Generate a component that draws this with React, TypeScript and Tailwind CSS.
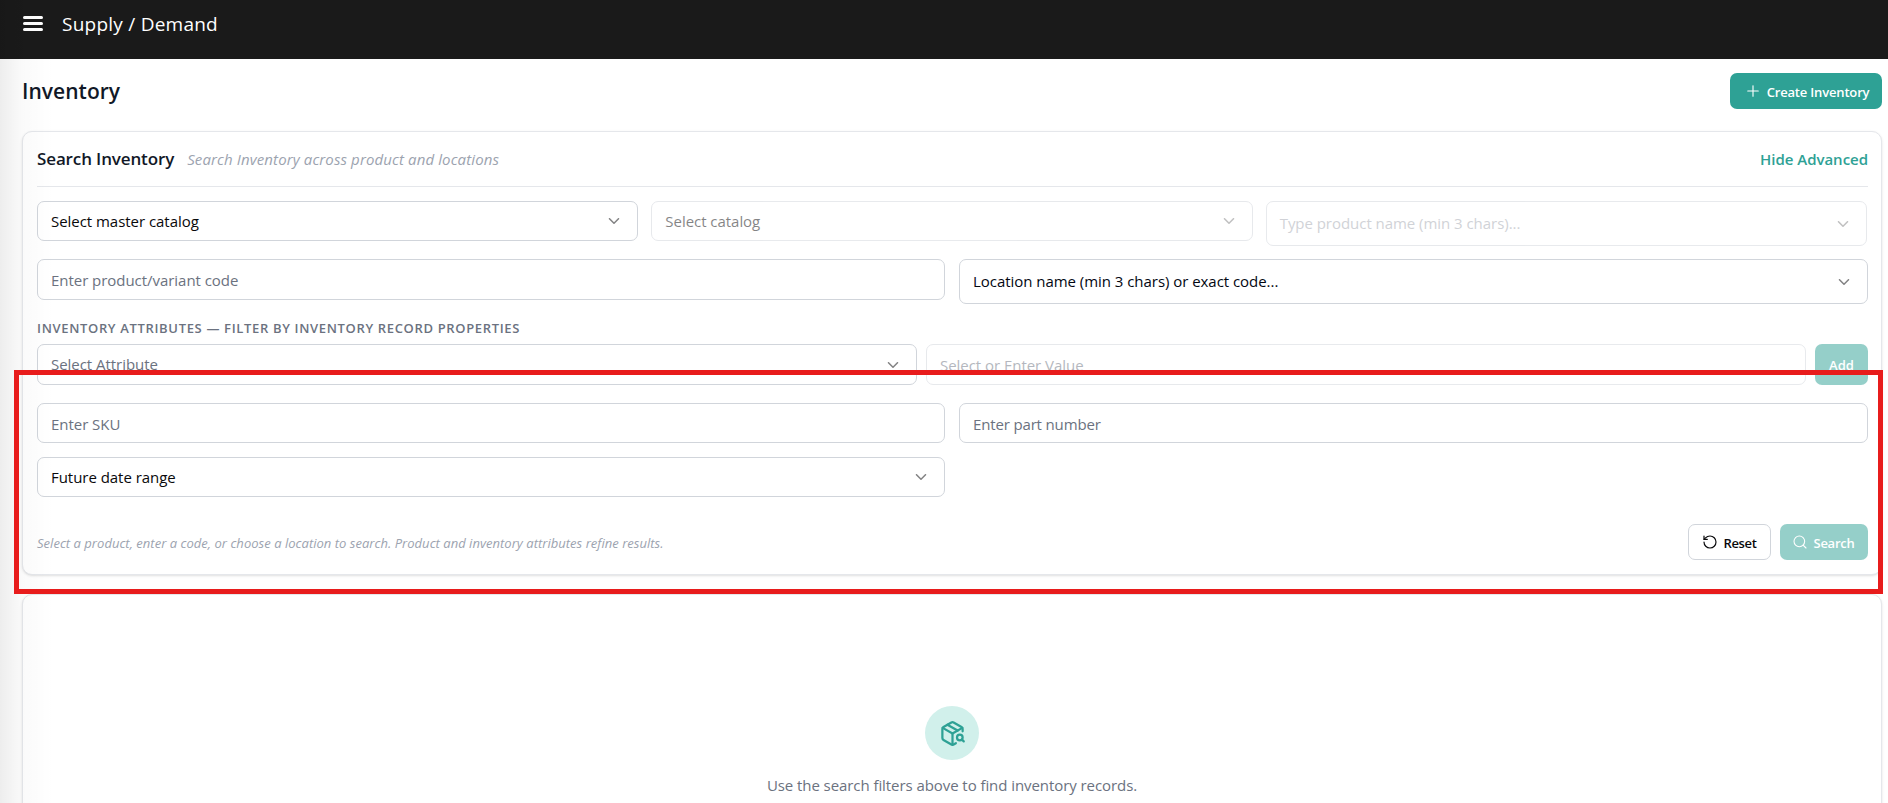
import { ChevronDown, PackageSearch, Plus, RotateCcw, Search } from "lucide-react";
import { clsx } from "clsx";

interface FieldProps {
  text: string;
  chevron?: boolean;
  className?: string;
}

function Field({ text, chevron, className }: FieldProps) {
  return (
    <div
      className={clsx(
        "flex items-center justify-between rounded-[7px] border border-[#d1d5db] pr-[14px] pl-[13px] text-[15px] tracking-[-0.04px]",
        className,
      )}
    >
      <span className="whitespace-nowrap">{text}</span>
      {chevron && <ChevronDown className="size-[18px] text-[#09090b] opacity-50" />}
    </div>
  );
}

function TopBar() {
  return (
    <header className="flex h-[59px] items-start gap-[19px] bg-[#1a1a1a] pl-[23px] text-white">
      <div className="mt-4 flex w-5 flex-col gap-[3px]">
        <span className="h-[3px] rounded-sm bg-white" />
        <span className="h-[3px] rounded-sm bg-white" />
        <span className="h-[3px] rounded-sm bg-white" />
      </div>
      <span className="mt-[10px] text-[19px] leading-7 tracking-[0.24px]">Supply / Demand</span>
    </header>
  );
}

function SearchCard() {
  return (
    <section className="h-[444px] rounded-[10px] border border-[#e5e7eb] bg-white pr-[13px] pl-[14px] shadow-[0_1px_3px_rgba(0,0,0,0.1),0_1px_2px_-1px_rgba(0,0,0,0.1)]">
      <div className="flex h-[55px] items-center border-b border-[#e5e7eb]">
        <h2 className="text-[17px] font-semibold tracking-[-0.13px] text-[#111827]">
          Search Inventory
        </h2>
        <span className="ml-[13px] text-[15px] tracking-[0.12px] text-[#9ca3af] italic">
          Search Inventory across product and locations
        </span>
        <button className="ml-auto text-[15px] font-semibold tracking-[-0.02px] text-[#2ea195]">
          Hide Advanced
        </button>
      </div>

      <div className="mt-[14px] grid grid-cols-3 items-start gap-[13px] pr-px">
        <Field text="Select master catalog" chevron className="h-10 text-[#09090b]" />
        <Field text="Select catalog" chevron className="h-10 text-[#09090b] opacity-50" />
        <Field
          text="Type product name (min 3 chars)..."
          chevron
          className="h-[45px] text-[#a3a7b0] opacity-50"
        />
      </div>

      <div className="mt-[13px] grid grid-cols-[908px_1fr] items-start gap-[14px]">
        <Field text="Enter product/variant code" className="h-[41px] pt-0.5 text-[#6b7280]" />
        <Field
          text="Location name (min 3 chars) or exact code..."
          chevron
          className="h-[45px] text-[#030712]"
        />
      </div>

      <p className="mt-3 h-7 text-[13px] leading-6 font-semibold tracking-[0.66px] text-[#6b7280]">
        INVENTORY ATTRIBUTES — FILTER BY INVENTORY RECORD PROPERTIES
      </p>
      <div className="flex gap-[9px]">
        <Field text="Select Attribute" chevron className="h-[41px] flex-1 text-[#6b7280]" />
        <Field
          text="Select or Enter Value"
          className="h-[41px] flex-1 pt-px text-[#6b7280] opacity-50"
        />
        <button className="h-[41px] w-[53px] rounded-[7px] bg-[#2ea195] pt-0.5 text-[13px] font-semibold text-white opacity-50">
          Add
        </button>
      </div>

      <div className="mt-[18px] grid grid-cols-[908px_1fr] gap-[14px]">
        <Field text="Enter SKU" className="h-10 pt-0.5 text-[#6b7280]" />
        <Field
          text="Enter part number"
          className="h-10 pt-0.5 tracking-[-0.15px] text-[#6b7280]"
        />
        <Field text="Future date range" chevron className="h-10 text-[#09090b]" />
      </div>

      <div className="mt-[27px] flex h-9 items-center gap-[9px]">
        <span className="mr-auto pt-[3px] text-[13px] tracking-[0.03px] text-[#9ca3af] italic">
          Select a product, enter a code, or choose a location to search. Product and inventory
          attributes refine results.
        </span>
        <button className="flex h-9 w-[83px] items-center justify-center gap-[5px] rounded-[7px] border border-[#d1d5db] text-[13px] font-semibold tracking-[-0.35px] text-[#09090b]">
          <RotateCcw className="size-4" strokeWidth={1.8} />
          <span className="pt-[3px]">Reset</span>
        </button>
        <button className="flex h-9 w-[88px] items-center justify-center gap-[5px] rounded-[7px] bg-[#2ea195] pr-px text-[13px] font-semibold tracking-[-0.25px] text-white opacity-50">
          <Search className="size-4" strokeWidth={1.6} />
          <span className="pt-[3px]">Search</span>
        </button>
      </div>
    </section>
  );
}

function EmptyState() {
  return (
    <section className="mt-[19px] flex h-[240px] flex-col items-center rounded-[10px] border border-[#e5e7eb] bg-white pt-[111px] shadow-sm">
      <div className="flex size-[54px] items-center justify-center rounded-full bg-[#d1f0eb]">
        <PackageSearch className="size-[27px] text-[#2ea195]" />
      </div>
      <p className="mt-[13px] text-[15px] leading-6 tracking-[-0.07px] text-[#6b7280]">
        Use the search filters above to find inventory records.
      </p>
    </section>
  );
}

export default function App() {
  return (
    <div className="relative h-[803px] w-[1888px] overflow-hidden bg-white font-['Open_Sans',sans-serif]">
      <TopBar />
      <main className="pr-[6px] pl-[22px]">
        <div className="flex items-center justify-between pt-[14px] pb-[22px]">
          <h1 className="pt-0.5 text-[21px] font-semibold tracking-[0.03px] text-[#111827]">
            Inventory
          </h1>
          <button className="flex h-9 w-[152px] items-center justify-center gap-[5px] rounded-[7px] bg-[#2ea195] pl-px text-[13px] font-semibold tracking-[-0.17px] text-white">
            <Plus className="size-[18px]" strokeWidth={1.5} />
            <span className="pt-[3px]">Create Inventory</span>
          </button>
        </div>
        <SearchCard />
        <EmptyState />
      </main>

      {/* soft shadow cast by the collapsed side menu */}
      <div className="pointer-events-none absolute inset-y-0 left-0 w-[54px] bg-linear-to-r from-black/7 via-black/2 via-40% to-transparent" />

      {/* highlighted area */}
      <div className="pointer-events-none absolute top-[370px] left-[14px] h-[224px] w-[1869px] border-[5px] border-[#e81c1c]" />
    </div>
  );
}
